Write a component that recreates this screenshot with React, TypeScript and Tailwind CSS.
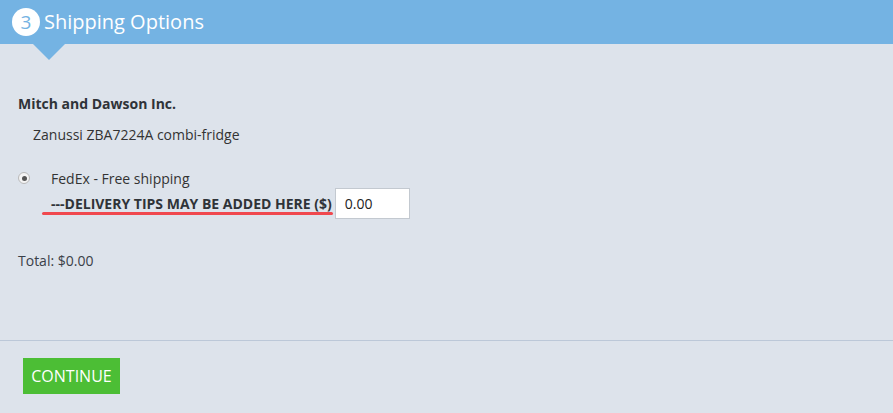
import React from "react";

export default function App() {
  return (
    <div
      className="w-[893px] h-[413px] bg-[#dde3eb] text-[#333] overflow-hidden flex flex-col"
      style={{ fontFamily: '"Open Sans", "Noto Sans", sans-serif' }}
    >
      <div className="relative h-[44px] bg-[#74b3e3] flex items-center pl-[12px] gap-[4px] shrink-0">
        <div className="w-[28px] h-[28px] rounded-full bg-white text-[#74b3e3] flex items-center justify-center text-[19px] leading-none">
          3
        </div>
        <div className="text-white text-[20px] leading-none">Shipping Options</div>
        <div className="absolute left-[33px] top-[44px] w-0 h-0 border-l-[16px] border-r-[16px] border-t-[16px] border-l-transparent border-r-transparent border-t-[#74b3e3]" />
      </div>
      <div className="flex-1 flex flex-col pl-[18px] pt-[50px]">
        <div className="text-[14px] font-bold leading-[20px] text-[#2f3338]">Mitch and Dawson Inc.</div>
        <div className="text-[14px] leading-[20px] pl-[15px] mt-[11px] text-[#333]">Zanussi ZBA7224A combi-fridge</div>
        <div className="flex mt-[24px]">
          <div className="w-[12px] h-[12px] mt-[3px] rounded-full border border-[#b9b9b9] bg-[#f4f4f4] flex items-center justify-center">
            <div className="w-[5px] h-[5px] rounded-full bg-[#555]" />
          </div>
          <div className="ml-[21px] flex flex-col">
            <div className="text-[14px] leading-[20px] text-[#333]">FedEx - Free shipping</div>
            <div className="flex items-center mt-[-1px]">
              <div className="relative text-[14px] font-bold leading-[20px] text-[#2f3338]">
                ---DELIVERY TIPS MAY BE ADDED HERE ($)
                <div className="absolute left-[-9px] right-[-1px] top-[18px] h-[3px] rounded-full bg-[#f0484e]" />
              </div>
              <div className="ml-[3px] w-[75px] h-[31px] bg-white border border-[#c3c9d0] flex items-center pl-[9px] text-[14px] text-[#222]">
                0.00
              </div>
            </div>
          </div>
        </div>
        <div className="text-[14px] leading-[20px] mt-[32px] text-[#3a4048]">Total: $0.00</div>
      </div>
      <div className="h-[1px] bg-[#bcc8d8] shrink-0" />
      <div className="h-[72px] shrink-0 pl-[23px] pt-[17px]">
        <div className="w-[97px] h-[36px] bg-[#4cbe35] text-white text-[16px] flex items-center justify-center">
          CONTINUE
        </div>
      </div>
    </div>
  );
}
